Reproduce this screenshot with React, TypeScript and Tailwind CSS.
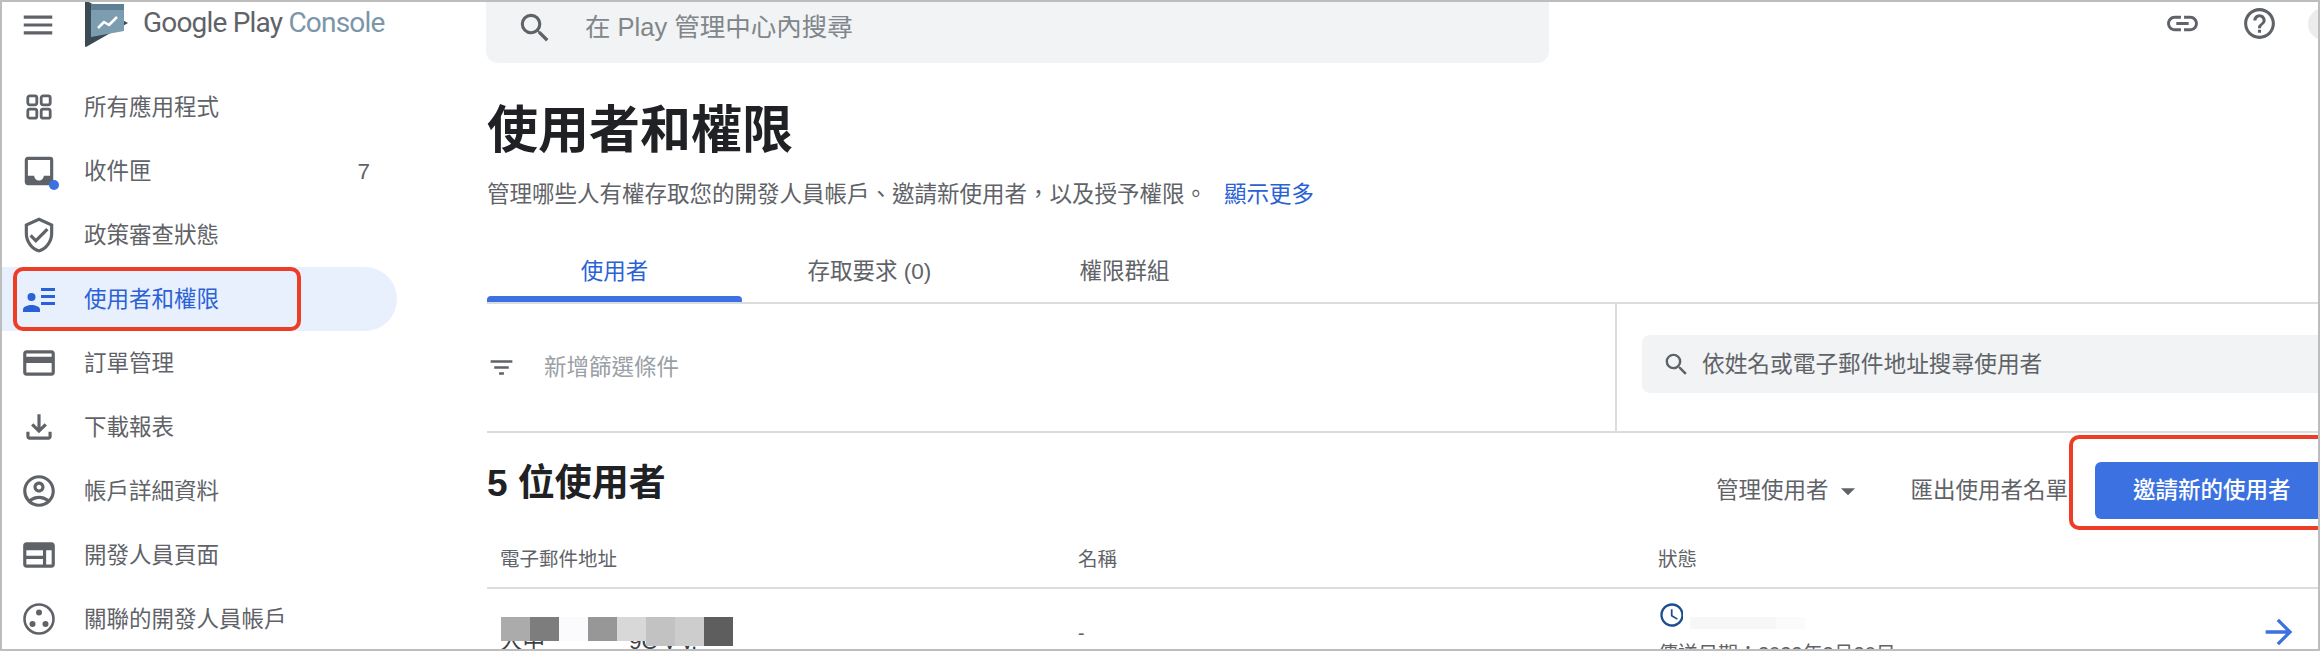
import type { ReactNode } from "react";
import {
  MdArrowDropDown,
  MdArrowForward,
  MdFilterList,
  MdHelpOutline,
  MdInbox,
  MdLink,
  MdMenu,
  MdOutlineAccessTime,
  MdOutlineAccountCircle,
  MdOutlineCreditCard,
  MdOutlineFileDownload,
  MdOutlineVerifiedUser,
  MdOutlineWeb,
  MdSearch,
} from "react-icons/md";

const AppsIcon = () => (
  <svg width="38" height="38" viewBox="0 0 38 38" fill="none" stroke="currentColor" strokeWidth="2.8">
    <rect x="7.8" y="7.8" width="9" height="9" rx="2" />
    <rect x="21.2" y="7.8" width="9" height="9" rx="2" />
    <rect x="7.8" y="21.2" width="9" height="9" rx="2" />
    <rect x="21.2" y="21.2" width="9" height="9" rx="2" />
  </svg>
);

const UsersIcon = () => (
  <svg width="38" height="38" viewBox="0 0 38 38" fill="currentColor">
    <circle cx="11.5" cy="17" r="4" />
    <path d="M3 32v-2.5c0-3 5-4.5 8.5-4.5s8.500 1.500 8.500 4.500V32z" />
    <rect x="21" y="8" width="14" height="3" />
    <rect x="21" y="15" width="14" height="3" />
    <rect x="21" y="22" width="14" height="3" />
  </svg>
);

const LinkedIcon = () => (
  <svg width="38" height="38" viewBox="0 0 38 38" fill="none">
    <circle cx="19" cy="19" r="14.500" stroke="currentColor" strokeWidth="2.600" />
    <circle cx="19" cy="12.500" r="3" fill="currentColor" />
    <circle cx="12.500" cy="24" r="3" fill="currentColor" />
    <circle cx="25.500" cy="24" r="3" fill="currentColor" />
  </svg>
);

const PlayLogo = () => (
  <svg width="44" height="47" viewBox="0 0 44 47">
    <path d="M0 0l43 23L1 47c-1 0-1-1-1-2z" fill="#3c4a53" />
    <path d="M6 4h33v27L6 37z" fill="#7c9cb0" />
    <path d="M6 4h33v6H6z" fill="#5f7f92" />
    <path d="M13 28l6-6 5 3 8-8" fill="none" stroke="#fff" strokeWidth="2.500" strokeLinejoin="round" />
  </svg>
);

const navItems: { label: string; icon: ReactNode; badge?: string; active?: boolean; dot?: boolean }[] = [
  { label: "所有應用程式", icon: <AppsIcon /> },
  { label: "收件匣", icon: <MdInbox size={38} />, badge: "7", dot: true },
  { label: "政策審查狀態", icon: <MdOutlineVerifiedUser size={38} /> },
  { label: "使用者和權限", icon: <UsersIcon />, active: true },
  { label: "訂單管理", icon: <MdOutlineCreditCard size={38} /> },
  { label: "下載報表", icon: <MdOutlineFileDownload size={38} /> },
  { label: "帳戶詳細資料", icon: <MdOutlineAccountCircle size={38} /> },
  { label: "開發人員頁面", icon: <MdOutlineWeb size={38} /> },
  { label: "關聯的開發人員帳戶", icon: <LinkedIcon /> },
];

const blurBlocks = [
  "h-[24px] bg-[#ababab]",
  "h-[24px] bg-[#7d7d7d]",
  "h-[24px] bg-[#fbfbfd]",
  "h-[24px] bg-[#979797]",
  "h-[24px] bg-[#d8d8d9]",
  "h-[29px] bg-[#c2c2c3]",
  "h-[29px] bg-[#cdcdcd]",
  "h-[29px] bg-[#5e5e5f]",
];

const tabs = ["使用者", "存取要求 (0)", "權限群組"];

const description = "管理哪些人有權存取您的開發人員帳戶、邀請新使用者\uFF0C以及授予權限。";
const sentDate = "傳送日期\uFF1A2022年3月30日";

const Sidebar = () => (
  <aside className="w-[485px] shrink-0">
    <div className="flex h-[73px] items-start">
      <div className="ml-[17px] mt-[4px] text-[#5f6368]">
        <MdMenu size={38} />
      </div>
      <div className="ml-[28px] -mt-[2px]">
        <PlayLogo />
      </div>
      <div className="ml-[14px] mt-[2px] font-['Roboto',sans-serif] text-[28px] leading-[38px] tracking-[-0.8px] text-[#5f6368]">
        Google Play <span className="text-[#7b96a8]">Console</span>
      </div>
    </div>
    <nav>
      {navItems.map((item) => (
        <div
          key={item.label}
          className={`flex h-[64px] w-[395px] items-center rounded-r-full pl-[18px] pr-[27px] ${
            item.active ? "bg-[#e8f0fe] text-[#2a62d6]" : "text-[#5f6368]"
          }`}
        >
          <div className="relative shrink-0">
            {item.icon}
            {item.dot && (
              <span className="absolute left-[29px] top-[28px] h-[10px] w-[10px] rounded-full bg-[#3b71e0]" />
            )}
          </div>
          <span className="ml-[26px] pt-[2px]">{item.label}</span>
          {item.badge && <span className="ml-auto pt-[2px] font-medium">{item.badge}</span>}
        </div>
      ))}
    </nav>
  </aside>
);

const Main = () => (
  <main className="min-w-0 flex-1">
    <div className="flex items-start">
      <div className="-ml-px flex h-[61px] w-[1063px] items-center rounded-b-xl bg-[#f1f3f4] pl-[30px] text-[#80868b]">
        <MdSearch size={38} className="-mt-[10px] text-[#5f6368]" />
        <span className="-mt-[11px] ml-[31px] text-[25.500px]">在 Play 管理中心內搜尋</span>
      </div>
      <div className="ml-auto mt-[3px] flex items-center gap-[40px] text-[#5f6368]">
        <MdLink size={37} />
        <MdHelpOutline size={37} />
        <div className="-mr-[24px] ml-[-10px] h-[32px] w-[34px] shrink-0 rounded-full bg-[#ececec]" />
      </div>
    </div>

    <h1 className="mt-[38px] h-[60px] text-[51px] font-bold leading-[60px] text-[#202124]">使用者和權限</h1>
    <p className="mt-[19px] flex h-[30px] items-center">
      {description}
      <a className="ml-[17px] text-[#2a62d6]">顯示更多</a>
    </p>

    <div className="mt-[30px] flex h-[64px] border-b-2 border-[#dadce0]">
      {tabs.map((tab, i) => (
        <div key={tab} className="flex w-[255px] flex-col">
          <div className={`flex flex-1 items-center justify-center pt-[8px] ${i === 0 ? "text-[#2a62d6]" : ""}`}>
            {tab}
          </div>
          <div className={`h-[6px] rounded-t-[4px] ${i === 0 ? "bg-[#3b71e0]" : ""}`} />
        </div>
      ))}
    </div>

    <div className="flex h-[129px] border-b-2 border-[#dadce0]">
      <div className="flex w-[1130px] items-center border-r-2 border-[#dadce0] text-[#9aa0a6]">
        <MdFilterList size={29} className="text-[#5f6368]" />
        <span className="ml-[28px]">新增篩選條件</span>
      </div>
      <div className="min-w-0 flex-1 pl-[25px] pt-[31px]">
        <div className="flex h-[58px] items-center rounded-l-lg bg-[#f1f3f4] pl-[20px]">
          <MdSearch size={29} />
          <span className="ml-[11px] text-[22.700px]">依姓名或電子郵件地址搜尋使用者</span>
        </div>
      </div>
    </div>

    <div className="flex h-[96px] items-start">
      <h2 className="mt-[29px] text-[37px] font-bold leading-[44px] text-[#202124]">5 位使用者</h2>
      <div className="ml-auto mt-[29px] flex h-[57px] items-center">
        <span>管理使用者</span>
        <MdArrowDropDown size={34} className="ml-[3px]" />
        <span className="ml-[45px]">匯出使用者名單</span>
        <button className="ml-[27px] flex h-[57px] w-[223px] items-center rounded-l-[6px] bg-[#3b71e0] pl-[38px] font-medium text-white">
          邀請新的使用者
        </button>
      </div>
    </div>

    <div className="grid h-[60px] grid-cols-[591px_580px_1fr] items-center border-b-2 border-[#dadce0] pt-[2px] text-[19.500px] text-[#5f6368]">
      <span className="pl-[13px]">電子郵件地址</span>
      <span>名稱</span>
      <span>狀態</span>
    </div>

    <div className="grid h-[88px] grid-cols-[591px_580px_1fr]">
      <div className="relative pl-[13px] pt-[40px] leading-[26px] text-[#3c4043]">
        <span>人中</span>
        <span className="ml-[84px]">9C y y.</span>
        <div className="absolute left-[14px] top-[28px] flex items-start">
          {blurBlocks.map((block) => (
            <div key={block} className={`w-[29px] ${block}`} />
          ))}
        </div>
      </div>
      <span className="pt-[31px] text-[19.500px] leading-[26px]">-</span>
      <div className="flex items-start">
        <div className="pt-[12px] text-[20px] leading-[24px]">
          <div className="flex h-[29px] items-start">
            <div className="w-[25px] overflow-hidden text-[#1a4f8c]">
              <MdOutlineAccessTime size={28} />
            </div>
            <div className="ml-[7px] mt-[16px] h-[12px] w-[86px] bg-[#f7f7f7]" />
            <div className="mt-[16px] h-[12px] w-[29px] bg-[#fbfbfb]" />
          </div>
          <div className="mt-[12px]">{sentDate}</div>
        </div>
        <MdArrowForward size={40} className="ml-auto mr-[19px] mt-[23px] text-[#3b71e0]" />
      </div>
    </div>
  </main>
);

export default function App() {
  return (
    <div className="relative flex h-[651px] w-[2320px] overflow-hidden border-2 border-[#bdbdbd] bg-white font-['Liberation_Sans','Noto_Sans_CJK_TC',sans-serif] text-[22.500px] leading-[30px] text-[#5f6368]">
      <Sidebar />
      <Main />
      <div className="absolute left-[11px] top-[265px] h-[64px] w-[288px] rounded-[10px] border-4 border-[#ee3d27]" />
      <div className="absolute left-[2067px] top-[433px] h-[95px] w-[260px] rounded-[10px] border-4 border-[#ee3d27]" />
    </div>
  );
}
